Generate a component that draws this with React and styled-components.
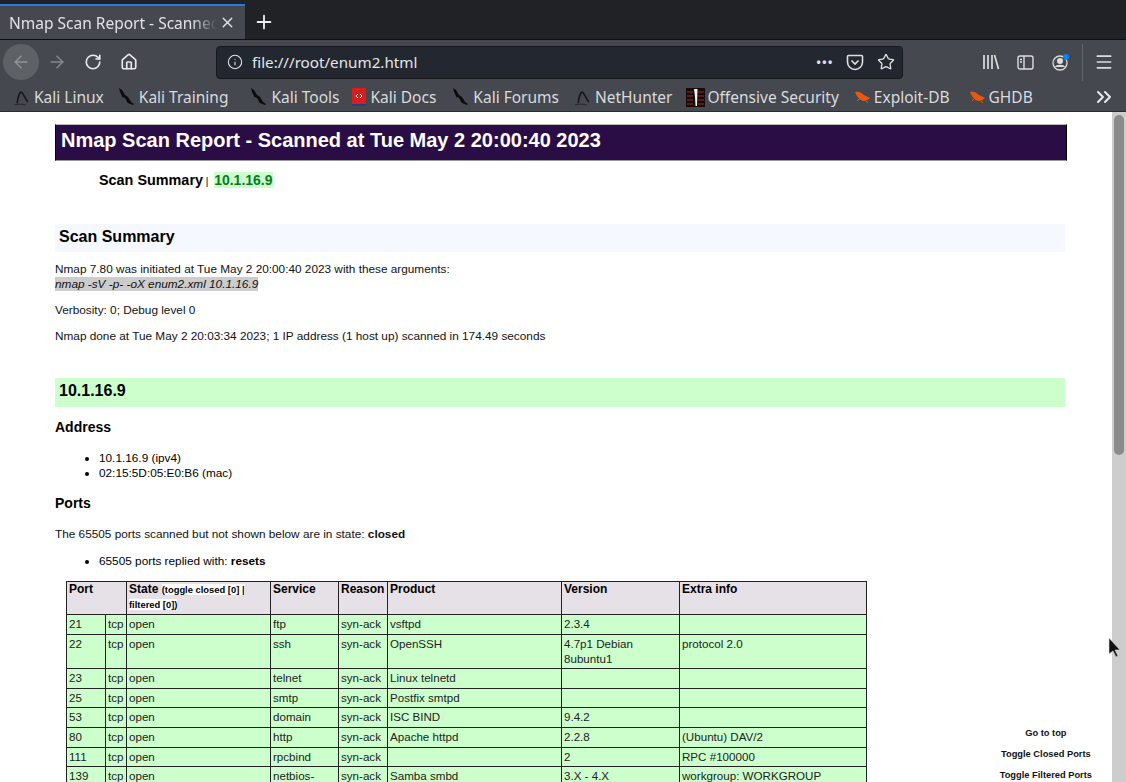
import styled, { createGlobalStyle } from "styled-components";
import { ArrowLeft, ArrowRight, ChevronsRight, Home, Info, Menu, Plus, RotateCw, Star, X } from "lucide-react";

const GlobalStyle = createGlobalStyle`
  html, body {
    margin: 0;
    height: 100%;
    overflow: hidden;
    background: #fff;
  }
  #root {
    height: 100%;
  }
`;

const Window = styled.div`
  position: relative;
  width: 1126px;
  height: 782px;
  display: flex;
  flex-direction: column;
  overflow: hidden;
`;

const TabBar = styled.div`
  height: 40px;
  flex: none;
  display: flex;
  background: #202226;
  border-bottom: 1px solid #0e0f11;
  box-sizing: border-box;
  padding-top: 4px;
`;

const Tab = styled.div`
  width: 245px;
  display: flex;
  align-items: center;
  box-sizing: border-box;
  padding: 0 9px 0 9px;
  background: #45484e;
  border-top: 2px solid #2a78e6;
  color: #e0e2e6;
  font: 15.5px "Noto Sans", sans-serif;
`;

const TabTitle = styled.span`
  flex: 1;
  white-space: nowrap;
  overflow: hidden;
  margin-right: 2px;
  mask-image: linear-gradient(90deg, #000 88%, transparent 100%);
`;

const NewTab = styled.div`
  width: 38px;
  display: flex;
  align-items: center;
  justify-content: center;
  color: #eceef0;
`;

const NavBar = styled.div`
  height: 44px;
  flex: none;
  display: flex;
  align-items: center;
  background: #45484e;
  box-sizing: border-box;
  padding: 0 12px 0 3px;
`;

const NavButton = styled.div`
  width: 36px;
  height: 36px;
  flex: none;
  display: flex;
  align-items: center;
  justify-content: center;
  border-radius: 50%;
  background: ${(p) => (p.$round ? "#5e6166" : "transparent")};
  color: ${(p) => p.$color || "#e8e9ea"};
`;

const UrlBar = styled.div`
  width: 687px;
  height: 33px;
  flex: none;
  margin-left: 69px;
  display: flex;
  align-items: center;
  box-sizing: border-box;
  padding: 0 7px 0 10px;
  background: #23272f;
  border: 1px solid #16181c;
  border-radius: 4px;
  color: #e4e6e8;
  font: 15.2px "Noto Sans", sans-serif;
`;

const UrlText = styled.span`
  flex: 1;
  margin-left: 9px;
`;

const UrlActions = styled.div`
  display: flex;
  align-items: center;
  gap: 13px;
  color: #dfe0e2;
`;

const Tools = styled.div`
  margin-left: auto;
  display: flex;
  align-items: center;
  color: #dcdddf;
`;

const ToolSlot = styled.div`
  width: 35px;
  height: 32px;
  display: flex;
  align-items: center;
  justify-content: center;
`;

const Divider = styled.div`
  width: 1px;
  height: 37px;
  margin: 0 11px 0 4px;
  background: #63666b;
`;

const BookmarkBar = styled.div`
  height: 28px;
  flex: none;
  display: flex;
  align-items: center;
  box-sizing: border-box;
  padding: 0 10px 1px 13px;
  background: #45484e;
  border-bottom: 1px solid #2a2c30;
  color: #d9dbde;
  font: 15.5px "Noto Sans", sans-serif;
`;

const Bookmark = styled.div`
  display: flex;
  align-items: center;
  gap: 3px;
  margin-right: ${(p) => p.$after}px;
  white-space: nowrap;
`;

const BookmarkMore = styled.div`
  margin-left: auto;
  display: flex;
  color: #e8e9ea;
`;

const Viewport = styled.div`
  flex: 1;
  min-height: 0;
  display: flex;
  background: #fff;
`;

const Page = styled.div`
  flex: 1;
  min-width: 0;
  overflow: hidden;
  box-sizing: border-box;
  padding: 12px 45px 0 55px;
  color: #000;
  font: 11.8px/15px "Liberation Sans", Arial, sans-serif;
`;

const Scrollbar = styled.div`
  width: 14px;
  flex: none;
  box-sizing: border-box;
  padding: 3px 2px;
  background: #cdcdcd;
`;

const Thumb = styled.div`
  width: 10px;
  height: 340px;
  border-radius: 5px;
  background: #8b8b8b;
`;

const Banner = styled.h1`
  margin: 0;
  height: 37px;
  box-sizing: border-box;
  padding-left: 5px;
  background: #2a0d45;
  border: 1px solid #000;
  border-top-color: #bbb;
  border-bottom-color: #999;
  color: #fff;
  font: bold 20px/31px "Liberation Sans", Arial, sans-serif;
`;

const SummaryNav = styled.div`
  height: 20px;
  margin: 9px 0 0 44px;
  font-size: 10px;
  line-height: 21px;
`;

const NavLink = styled.span`
  font-size: 14.4px;
  font-weight: bold;
`;

const HostLink = styled.span`
  margin-left: 3px;
  font-size: 14px;
  font-weight: bold;
  color: #0a7a26;
  background: #ccffcc;
`;

const SectionTitle = styled.h2`
  width: 1010px;
  margin: ${(p) => p.$top}px 0 0;
  height: ${(p) => p.$h}px;
  box-sizing: border-box;
  padding-left: 4px;
  background: ${(p) => p.$bg};
  font: bold 16px/25px "Liberation Sans", Arial, sans-serif;
`;

const Paragraph = styled.p`
  margin: ${(p) => p.$top}px 0 0;
  color: #111;
`;

const Args = styled.span`
  background: #cccccc;
  font-style: italic;
`;

const SubTitle = styled.h3`
  margin: ${(p) => p.$top}px 0 0;
  font: bold 14px/18px "Liberation Sans", Arial, sans-serif;
`;

const List = styled.ul`
  margin: ${(p) => p.$top}px 0 0;
  padding-left: 44px;
`;

const PortTable = styled.table`
  width: 800px;
  margin: 12px 0 0 11px;
  table-layout: fixed;
  border-collapse: collapse;
  font-size: 11.6px;
  line-height: 15px;
`;

const HeadCell = styled.th`
  padding: 0 2px 2px;
  border: 1px solid #222;
  background: #e6e1e6;
  font-size: 12px;
  line-height: 14px;
  text-align: left;
  vertical-align: top;
`;

const Toggle = styled.span`
  font-size: 9.4px;
  background: #fff;
`;

const Cell = styled.td`
  padding: 1px 2px 2.6px;
  border: 1px solid #222;
  background: #ccffcc;
  color: #222;
  vertical-align: top;
`;

const FloatLinks = styled.div`
  position: absolute;
  right: 34px;
  bottom: 0;
  display: flex;
  flex-direction: column;
  align-items: center;
  gap: 7px;
  color: #111;
  font: bold 9.3px/14px "Liberation Sans", Arial, sans-serif;
`;

const Cursor = styled.svg`
  position: absolute;
  left: 1108px;
  top: 637px;
`;

function KaliDragon() {
  return (
    <svg width="20" height="20" viewBox="0 0 20 20">
      <path d="M3 1l3 2 3 5 3 2 3 5 3 2-1 1-5-2-3-5-3-2-2-4z" fill="#0b0b0b" />
      <path d="M9 9l-3 1M14 13l-3 2" stroke="#0b0b0b" strokeWidth="1.2" />
    </svg>
  );
}

function KaliHunter() {
  return (
    <svg width="18" height="18" viewBox="0 0 18 18" fill="none">
      <path d="M4 15c1-3 1-9 4-11 3 1 3 6 7 10" stroke="#17181a" strokeWidth="1.6" />
      <path d="M1 17c3-1 8-1 12 0" stroke="#2b2c2e" strokeWidth="1.2" />
    </svg>
  );
}

function DocsIcon() {
  return (
    <svg width="16" height="20" viewBox="0 0 16 20">
      <rect x="1" y="1" width="14" height="17" rx="1" fill="#d81e1e" />
      <rect x="1" y="17" width="14" height="2" fill="#2b3c86" />
      <path d="M5 9l2-2M5 9l2 2M11 9L9 7M11 9l-2 2" stroke="#fff" strokeWidth="1" />
    </svg>
  );
}

function OffSecIcon() {
  return (
    <svg width="19" height="19" viewBox="0 0 19 19">
      <rect width="19" height="19" fill="#1a0b0b" />
      <path d="M1 4h6M1 8h6M1 12h6M1 16h6M12 4h6M12 8h6M12 12h6M12 16h6" stroke="#8a3030" strokeWidth="1" />
      <path d="M8 1h3.5l-.5 17H9.5L9 9z" fill="#f2f2f2" />
    </svg>
  );
}

function BugIcon() {
  return (
    <svg width="17" height="14" viewBox="0 0 17 14">
      <path d="M1 2c3-1 6 0 9 3 2 1 4 2 6 3-2 2-4 3-6 3C6 11 3 7 1 2z" fill="#e8590c" />
      <path d="M12 11l2 2M5 9l-2 2" stroke="#e8590c" strokeWidth="1" />
    </svg>
  );
}

function LibraryIcon() {
  return (
    <svg width="18" height="16" viewBox="0 0 18 16" fill="none" stroke="currentColor" strokeWidth="1.7">
      <path d="M2 1v14M6 1v14M10 1v14M12.5 1l4 14" />
    </svg>
  );
}

function SidebarIcon() {
  return (
    <svg width="17" height="15" viewBox="0 0 17 15" fill="none" stroke="currentColor" strokeWidth="1.4">
      <rect x="1" y="1" width="15" height="13" rx="2" />
      <path d="M7 1v13M3 4.5h2M3 7h2" />
    </svg>
  );
}

function AccountIcon() {
  return (
    <svg width="20" height="20" viewBox="0 0 20 20" fill="none">
      <circle cx="9" cy="11" r="7" stroke="currentColor" strokeWidth="1.3" />
      <circle cx="9" cy="9" r="3" fill="currentColor" />
      <path d="M4 15c1-3 9-3 10 0" fill="currentColor" />
      <circle cx="15" cy="5" r="3" fill="#0a84ff" />
    </svg>
  );
}

function PocketIcon() {
  return (
    <svg width="18" height="17" viewBox="0 0 18 17" fill="none" stroke="currentColor" strokeWidth="1.6">
      <path d="M1.5 2.5a1 1 0 0 1 1-1h13a1 1 0 0 1 1 1V8a7.5 7.5 0 0 1-15 0z" />
      <path d="M5.5 6.5L9 10l3.5-3.5" />
    </svg>
  );
}

const bookmarks = [
  ["Kali Linux", <KaliHunter />, 12],
  ["Kali Training", <KaliDragon />, 20],
  ["Kali Tools", <KaliDragon />, 12],
  ["Kali Docs", <DocsIcon />, 14],
  ["Kali Forums", <KaliDragon />, 15],
  ["NetHunter", <KaliHunter />, 13],
  ["Offensive Security", <OffSecIcon />, 15],
  ["Exploit-DB", <BugIcon />, 19],
  ["GHDB", <BugIcon />, 0],
];

const columns = [39, 21, 144, 68, 49, 174, 118, 187];

const ports = [
  ["21", "open", "ftp", "vsftpd", "2.3.4", ""],
  ["22", "open", "ssh", "OpenSSH", "4.7p1 Debian 8ubuntu1", "protocol 2.0"],
  ["23", "open", "telnet", "Linux telnetd", "", ""],
  ["25", "open", "smtp", "Postfix smtpd", "", ""],
  ["53", "open", "domain", "ISC BIND", "9.4.2", ""],
  ["80", "open", "http", "Apache httpd", "2.2.8", "(Ubuntu) DAV/2"],
  ["111", "open", "rpcbind", "", "2", "RPC #100000"],
  ["139", "open", <>netbios-<br />ssn</>, "Samba smbd", "3.X - 4.X", "workgroup: WORKGROUP"],
];

export default function App() {
  return (
    <Window>
      <GlobalStyle />
      <TabBar>
        <Tab>
          <TabTitle>Nmap Scan Report - Scanned at Tue May 2</TabTitle>
          <X size={17} strokeWidth={2} />
        </Tab>
        <NewTab>
          <Plus size={22} strokeWidth={2} />
        </NewTab>
      </TabBar>
      <NavBar>
        <NavButton $round $color="#8f9296">
          <ArrowLeft size={20} strokeWidth={1.8} />
        </NavButton>
        <NavButton $color="#85888c">
          <ArrowRight size={20} strokeWidth={1.8} />
        </NavButton>
        <NavButton>
          <RotateCw size={18} strokeWidth={2.2} />
        </NavButton>
        <NavButton>
          <Home size={18} strokeWidth={2.2} />
        </NavButton>
        <UrlBar>
          <Info size={16} strokeWidth={1.6} />
          <UrlText>file:///root/enum2.html</UrlText>
          <UrlActions>
            <span>•••</span>
            <PocketIcon />
            <Star size={18} strokeWidth={1.8} />
          </UrlActions>
        </UrlBar>
        <Tools>
          <ToolSlot>
            <LibraryIcon />
          </ToolSlot>
          <ToolSlot>
            <SidebarIcon />
          </ToolSlot>
          <ToolSlot>
            <AccountIcon />
          </ToolSlot>
          <Divider />
          <Menu size={20} strokeWidth={2} />
        </Tools>
      </NavBar>
      <BookmarkBar>
        {bookmarks.map(([label, icon, after]) => (
          <Bookmark key={label} $after={after}>
            {icon}
            {label}
          </Bookmark>
        ))}
        <BookmarkMore>
          <ChevronsRight size={24} strokeWidth={2} />
        </BookmarkMore>
      </BookmarkBar>
      <Viewport>
        <Page>
          <Banner>Nmap Scan Report - Scanned at Tue May 2 20:00:40 2023</Banner>
          <SummaryNav>
            <NavLink>Scan Summary</NavLink> | <HostLink>10.1.16.9</HostLink>
          </SummaryNav>
          <SectionTitle $top={34} $h={28} $bg="#f5f9ff">
            Scan Summary
          </SectionTitle>
          <Paragraph $top={10}>
            Nmap 7.80 was initiated at Tue May 2 20:00:40 2023 with these arguments:
            <br />
            <Args>nmap -sV -p- -oX enum2.xml 10.1.16.9</Args>
          </Paragraph>
          <Paragraph $top={11}>Verbosity: 0; Debug level 0</Paragraph>
          <Paragraph $top={11}>Nmap done at Tue May 2 20:03:34 2023; 1 IP address (1 host up) scanned in 174.49 seconds</Paragraph>
          <SectionTitle $top={34} $h={29} $bg="#ccffcc">
            10.1.16.9
          </SectionTitle>
          <SubTitle $top={11}>Address</SubTitle>
          <List $top={15}>
            <li>10.1.16.9 (ipv4)</li>
            <li>02:15:5D:05:E0:B6 (mac)</li>
          </List>
          <SubTitle $top={13}>Ports</SubTitle>
          <Paragraph $top={15}>
            The 65505 ports scanned but not shown below are in state: <b>closed</b>
          </Paragraph>
          <List $top={12}>
            <li>
              65505 ports replied with: <b>resets</b>
            </li>
          </List>
          <PortTable>
            <colgroup>
              {columns.map((w, i) => (
                <col key={i} width={w} />
              ))}
            </colgroup>
            <thead>
              <tr>
                <HeadCell colSpan={2}>Port</HeadCell>
                <HeadCell>
                  State <Toggle>(toggle closed [0] | filtered [0])</Toggle>
                </HeadCell>
                <HeadCell>Service</HeadCell>
                <HeadCell>Reason</HeadCell>
                <HeadCell>Product</HeadCell>
                <HeadCell>Version</HeadCell>
                <HeadCell>Extra info</HeadCell>
              </tr>
            </thead>
            <tbody>
              {ports.map((row) => (
                <tr key={row[0]}>
                  <Cell>{row[0]}</Cell>
                  <Cell>tcp</Cell>
                  <Cell>{row[1]}</Cell>
                  <Cell>{row[2]}</Cell>
                  <Cell>syn-ack</Cell>
                  <Cell>{row[3]}</Cell>
                  <Cell>{row[4]}</Cell>
                  <Cell>{row[5]}</Cell>
                </tr>
              ))}
            </tbody>
          </PortTable>
        </Page>
        <Scrollbar>
          <Thumb />
        </Scrollbar>
      </Viewport>
      <FloatLinks>
        <span>Go to top</span>
        <span>Toggle Closed Ports</span>
        <span>Toggle Filtered Ports</span>
      </FloatLinks>
      <Cursor width="14" height="22" viewBox="0 0 14 22">
        <path d="M1 1v16l4-3 3 6 2-1-3-6h5z" fill="#111" stroke="#ddd" strokeWidth=".6" />
      </Cursor>
    </Window>
  );
}
